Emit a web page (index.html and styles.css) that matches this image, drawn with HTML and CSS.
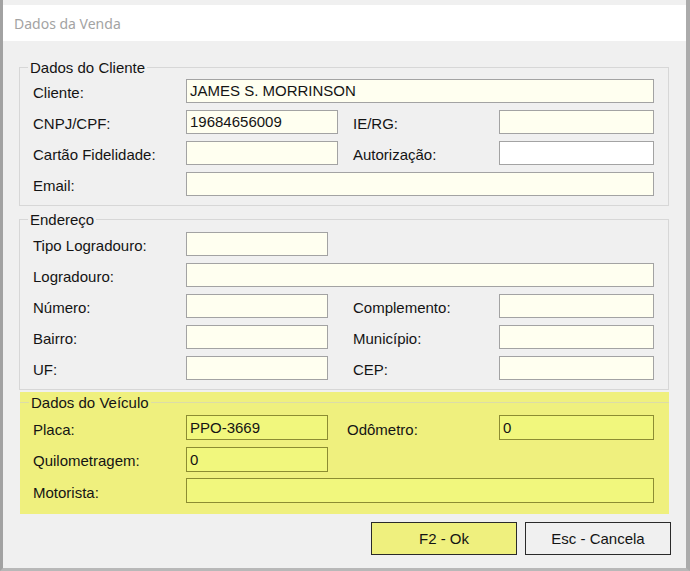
FILE: index.html
```html
<!DOCTYPE html>
<html lang="pt-BR">
<head>
<meta charset="utf-8">
<title>Dados da Venda</title>
<link rel="stylesheet" href="styles.css">
</head>
<body>
<div class="window">
  <div class="titlebar">Dados da Venda</div>
  <div class="content">
    <fieldset class="group g1">
      <legend>Dados do Cliente</legend>
      <div class="grid">
        <span class="lbl">Cliente:</span><div class="input span3">JAMES S. MORRINSON</div>
        <span class="lbl">CNPJ/CPF:</span><div class="input">19684656009</div><span class="lbl l2">IE/RG:</span><div class="input"></div>
        <span class="lbl">Cartão Fidelidade:</span><div class="input"></div><span class="lbl l2">Autorização:</span><div class="input white"></div>
        <span class="lbl">Email:</span><div class="input span3"></div>
      </div>
    </fieldset>
    <fieldset class="group g2">
      <legend>Endereço</legend>
      <div class="grid">
        <span class="lbl">Tipo Logradouro:</span><div class="input"></div><span></span><span></span>
        <span class="lbl">Logradouro:</span><div class="input span3"></div>
        <span class="lbl">Número:</span><div class="input"></div><span class="lbl l2">Complemento:</span><div class="input"></div>
        <span class="lbl">Bairro:</span><div class="input"></div><span class="lbl l2">Município:</span><div class="input"></div>
        <span class="lbl">UF:</span><div class="input"></div><span class="lbl l2">CEP:</span><div class="input"></div>
      </div>
    </fieldset>
    <div class="panel">
      <fieldset class="group g3">
        <legend>Dados do Veículo</legend>
        <div class="grid">
          <span class="lbl">Placa:</span><div class="input">PPO-3669</div><span class="lbl l2">Odômetro:</span><div class="input">0</div>
          <span class="lbl">Quilometragem:</span><div class="input">0</div><span></span><span></span>
          <span class="lbl">Motorista:</span><div class="input span3"></div>
        </div>
      </fieldset>
    </div>
    <div class="buttons">
      <button class="btn btn-ok">F2 - Ok</button>
      <button class="btn">Esc - Cancela</button>
    </div>
  </div>
</div>
</body>
</html>
```
FILE: styles.css
```css
html, body {
  margin: 0;
  padding: 0;
}
body {
  width: 690px;
  height: 571px;
  overflow: hidden;
  background: #efefef;
  font-family: "Liberation Sans", Arial, sans-serif;
  font-size: 15px;
  color: #141414;
}
.window {
  box-sizing: border-box;
  height: 571px;
  display: flex;
  flex-direction: column;
  padding-top: 5px;
  border-left: 3px solid #a2a2a2;
  border-right: 4px solid #ababab;
  border-bottom: 3px solid #b8b8b8;
  background: #f0f0f0;
}
.titlebar {
  height: 36px;
  flex: none;
  background: #ffffff;
  font-family: "Noto Sans", "Open Sans", sans-serif;
  font-size: 14px;
  color: #a3a3a3;
  display: flex;
  align-items: center;
  padding-left: 11px;
}
.content {
  flex: 1;
  padding-left: 16px;
  padding-top: 18px;
  display: flex;
  flex-direction: column;
}
.group {
  margin: 0;
  width: 650px;
  box-sizing: border-box;
  border: 1px solid #d7d7d7;
  padding: 3px 14px 9px 13px;
  min-width: 0;
}
.group legend {
  font-size: 15px;
  line-height: 17px;
  padding: 0 2px;
  margin-left: -5px;
}
.grid {
  display: grid;
  grid-template-columns: 153px 152px 161px 155px;
  grid-auto-rows: 24px;
  row-gap: 7px;
  align-items: center;
}
.g2 {
  margin-top: 5px;
  padding-top: 4px;
  padding-bottom: 9px;
}
.g2 .grid {
  grid-template-columns: 153px 142px 171px 155px;
}
.lbl {
  line-height: 17px;
  padding-top: 3px;
  white-space: nowrap;
}
.g1 .l2 { padding-left: 15px; }
.g2 .l2 { padding-left: 25px; }
.g3 .l2 { padding-left: 19px; }
.input {
  box-sizing: border-box;
  height: 100%;
  border: 1px solid #a3a3a3;
  background: #fffff0;
  padding: 0 3px;
  line-height: 22px;
  white-space: nowrap;
  overflow: hidden;
}
.input.white { background: #ffffff; }
.span3 { grid-column: span 3; }
.panel {
  margin-top: 2px;
  margin-left: 1px;
  width: 649px;
  background: #eff07e;
  padding-top: 2px;
  padding-bottom: 11px;
}
.g3 {
  width: 649px;
  border: none;
  border-top: 1px solid #dcdca8;
  padding: 4px 14px 0 13px;
}
.g3 legend {
  margin-left: -4px;
}
.g3 .grid {
  grid-template-columns: 153px 142px 171px 155px;
  grid-auto-rows: 25px;
  row-gap: 6.5px;
}
.g3 .input {
  background: #f1f77d;
  border-color: #8c8c32;
  line-height: 23px;
}
.buttons {
  display: flex;
  justify-content: flex-end;
  gap: 8px;
  margin-top: 8px;
  padding-right: 15px;
}
.btn {
  width: 146px;
  height: 33px;
  box-sizing: border-box;
  border: 1px solid #2a2a2a;
  background: #f0f0f0;
  font-family: "Liberation Sans", Arial, sans-serif;
  font-size: 15px;
  color: #141414;
  padding: 0;
  margin: 0;
}
.btn-ok {
  background: #eff07e;
}
```
